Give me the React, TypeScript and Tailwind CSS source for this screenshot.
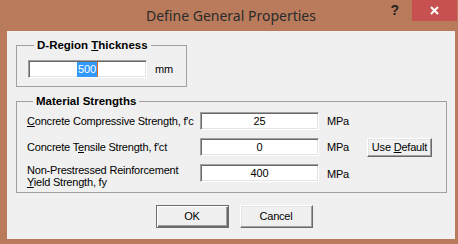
import React from 'react';

const sunken =
  'bg-white border border-t-[#a0a0a0] border-l-[#a0a0a0] border-b-white border-r-white shadow-[inset_1px_1px_0_#696969,inset_-1px_-1px_0_#e3e3e3]';

const raised =
  'bg-[#f0f0f0] border border-t-white border-l-white border-b-[#696969] border-r-[#696969] shadow-[inset_-1px_-1px_0_#a0a0a0,inset_1px_1px_0_#e3e3e3]';

const Field = ({ value }: { value: string }) => (
  <div className={`${sunken} h-[18px] w-[119px] flex items-center justify-center leading-none`}>
    {value}
  </div>
);

const App = () => {
  return (
    <div className="w-[458px] h-[244px] bg-[#b97b5b] flex flex-col font-['Liberation_Sans',Arial,sans-serif] text-[11px] text-black tracking-[-0.2px]">
      {/* Title bar */}
      <div className="h-[31px] grid grid-cols-[1fr_auto_1fr] tracking-normal">
        <div />
        <div className="pt-[5px] pl-[4px] font-['Noto_Sans',sans-serif] text-[14px] text-[#2b2b2b]">
          Define General Properties
        </div>
        <div className="flex justify-end items-start pr-[1px]">
          <span className="mt-[3px] mr-[13px] font-['Liberation_Sans',sans-serif] font-bold text-[14px] text-[#222] leading-none">
            ?
          </span>
          <div className="w-[45px] h-[21px] bg-[#c75050] flex items-center justify-center">
            <svg width="9" height="9" viewBox="0 0 9 9">
              <path d="M1 1 L8 8 M8 1 L1 8" stroke="white" strokeWidth="2" />
            </svg>
          </div>
        </div>
      </div>

      {/* Client area */}
      <div className="flex-1 ml-[7px] mr-[3px] mb-[5px] bg-[#f0f0f0] flex flex-col px-[9px]">
        <fieldset className="mt-[7px] w-[171px] border border-[#a0a0a0] pl-[11px] pt-[8px] pb-[8px]">
          <legend className="ml-[6px] px-[3px] font-bold text-[11.5px] leading-[14px] tracking-normal">
            D-Region <u className="underline-offset-1">T</u>hickness
          </legend>
          <div className="flex items-center">
            <div className={`${sunken} h-[18px] w-[119px] flex items-center justify-center`}>
              <span className="bg-[#3399ff] text-white h-[15px] flex items-center px-[1px]">500</span>
              <span className="w-[1px] h-[15px] bg-[#e07020]" />
            </div>
            <span className="ml-[8px]">mm</span>
          </div>
        </fieldset>

        <fieldset className="mt-[7px] w-[431px] border border-[#a0a0a0] pl-[10px] pt-[4px] pb-[10px]">
          <legend className="ml-[6px] px-[3px] font-bold text-[11.5px] leading-[14px] tracking-normal">
            Material Strengths
          </legend>
          <div className="grid grid-cols-[173px_119px_48px_65px] grid-rows-[18px_18px_18px] gap-y-[8px] items-center">
            <span>
              <u className="underline-offset-1">C</u>oncrete Compressive Strength, f'c
            </span>
            <Field value="25" />
            <span className="pl-[8px]">MPa</span>
            <div />

            <span>
              Concrete T<u className="underline-offset-1">e</u>nsile Strength, f'ct
            </span>
            <Field value="0" />
            <span className="pl-[8px]">MPa</span>
            <button className={`${raised} h-[19px] w-[65px] text-[11px] leading-none`}>
              Use <u className="underline-offset-1">D</u>efault
            </button>

            <span className="self-start leading-[12px]">
              Non-Prestressed Reinforcement
              <br />
              <u className="underline-offset-1">Y</u>ield Strength, fy
            </span>
            <Field value="400" />
            <span className="pl-[8px] pt-[2px]">MPa</span>
            <div />
          </div>
        </fieldset>

        <div className="mt-[12px] flex justify-center gap-[11px] pl-[6px]">
          <button className="h-[23px] w-[73px] bg-[#f0f0f0] border border-[#6d6d6d] shadow-[inset_1px_1px_0_white,inset_-1px_-1px_0_#696969,inset_-2px_-2px_0_#a0a0a0] text-[11px]">
            OK
          </button>
          <button className={`${raised} h-[23px] w-[73px] text-[11px]`}>Cancel</button>
        </div>
      </div>
    </div>
  );
};

export default App;
